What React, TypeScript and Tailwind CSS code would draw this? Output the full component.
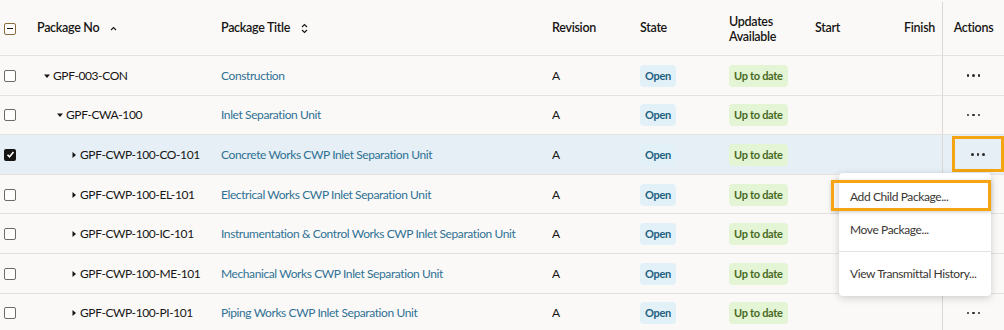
import React from 'react';

type Row = {
  no: string;
  title: string;
  level: number;
  expanded: boolean;
  selected?: boolean;
};

const rows: Row[] = [
  { no: 'GPF-003-CON', title: 'Construction', level: 0, expanded: true },
  { no: 'GPF-CWA-100', title: 'Inlet Separation Unit', level: 1, expanded: true },
  { no: 'GPF-CWP-100-CO-101', title: 'Concrete Works CWP Inlet Separation Unit', level: 2, expanded: false, selected: true },
  { no: 'GPF-CWP-100-EL-101', title: 'Electrical Works CWP Inlet Separation Unit', level: 2, expanded: false },
  { no: 'GPF-CWP-100-IC-101', title: 'Instrumentation & Control Works CWP Inlet Separation Unit', level: 2, expanded: false },
  { no: 'GPF-CWP-100-ME-101', title: 'Mechanical Works CWP Inlet Separation Unit', level: 2, expanded: false },
  { no: 'GPF-CWP-100-PI-101', title: 'Piping Works CWP Inlet Separation Unit', level: 2, expanded: false },
];

const cols = 'grid grid-cols-[37px_184px_331px_88px_89px_86px_65px_62px_62px]';
const indent = ['pl-[6px]', 'pl-[19px]', 'pl-[33px]'];

const Caret = ({ down }: { down: boolean }) =>
  down ? (
    <svg width="8" height="8" viewBox="0 0 8 8" className="mr-[2px] shrink-0">
      <path d="M1 2.5h6L4 6z" fill="#161513" />
    </svg>
  ) : (
    <svg width="8" height="8" viewBox="0 0 8 8" className="mr-[2px] shrink-0">
      <path d="M2.5 1v6L6 4z" fill="#161513" />
    </svg>
  );

const Checkbox = ({ checked }: { checked?: boolean }) =>
  checked ? (
    <span className="flex h-[12px] w-[12px] items-center justify-center rounded-[2px] bg-[#161513]">
      <svg width="9" height="9" viewBox="0 0 9 9">
        <path d="M1.5 4.8l2 2L7.5 2" stroke="#fff" strokeWidth="1.6" fill="none" />
      </svg>
    </span>
  ) : (
    <span className="block h-[12px] w-[12px] rounded-[2px] border border-[#6f6a64] bg-white" />
  );

const Dots = () => (
  <span className="flex items-center gap-[3px]">
    <span className="h-[2.5px] w-[2.5px] rounded-full bg-[#2b2825]" />
    <span className="h-[2.5px] w-[2.5px] rounded-full bg-[#2b2825]" />
    <span className="h-[2.5px] w-[2.5px] rounded-full bg-[#2b2825]" />
  </span>
);

const badge = 'rounded-[4px] px-[5px] py-[4px] text-[11px] font-bold leading-[14px] tracking-[-0.3px]';

export default function App() {
  return (
    <div className="relative h-[330px] w-[1004px] overflow-hidden bg-[#fbf9f8] text-[12px] tracking-[-0.4px] text-[#161513] [font-family:'Lato','Noto_Sans',sans-serif]">
      {/* header */}
      <div className={`${cols} h-[56px] border-b border-[#e5e2de] pt-[2px] text-[12.5px] font-semibold tracking-[-0.3px]`}>
        <div className="flex items-center pl-[4px]">
          <span className="flex h-[12px] w-[12px] items-center justify-center rounded-[2px] border border-[#8a6b3e] bg-white">
            <span className="h-[1.5px] w-[6px] bg-[#161513]" />
          </span>
        </div>
        <div className="flex items-center gap-[10px]">
          Package No
          <svg width="9" height="9" viewBox="0 0 9 9">
            <path d="M2 6l2.5-2.5L7 6" stroke="#161513" strokeWidth="1.1" fill="none" />
          </svg>
        </div>
        <div className="flex items-center gap-[10px]">
          Package Title
          <svg width="9" height="11" viewBox="0 0 9 11">
            <path d="M2 4l2.5-2.5L7 4M2 7l2.5 2.5L7 7" stroke="#161513" strokeWidth="1.1" fill="none" />
          </svg>
        </div>
        <div className="flex items-center">Revision</div>
        <div className="flex items-center">State</div>
        <div className="flex items-center leading-[15px]">
          Updates
          <br />
          Available
        </div>
        <div className="flex items-center">Start</div>
        <div className="flex items-center justify-end pr-[7px]">Finish</div>
        <div className="flex items-center justify-center border-l border-[#dcd8d3]">Actions</div>
      </div>

      {rows.map((r) => (
        <div
          key={r.no}
          className={`${cols} h-[39.6px] border-b border-[#e5e2de] pt-[1px] ${r.selected ? 'bg-[#e5eff5]' : ''}`}
        >
          <div className="flex items-center pl-[4px]">
            <Checkbox checked={r.selected} />
          </div>
          <div className={`flex items-center whitespace-nowrap ${indent[r.level]}`}>
            <Caret down={r.expanded} />
            {r.no}
          </div>
          <div className="flex items-center whitespace-nowrap text-[#2f7194]">{r.title}</div>
          <div className="flex items-center">A</div>
          <div className="flex items-center">
            <span className={`${badge} bg-[#e2f0f8] text-[#22607f]`}>Open</span>
          </div>
          <div className="flex items-center">
            <span className={`${badge} bg-[#e3f5d5] text-[#4a6a24]`}>Up to date</span>
          </div>
          <div />
          <div />
          <div className="-mt-[1px] flex items-center justify-center border-l border-[#dcd8d3]">
            {r.selected ? (
              <span className="ml-[9px] flex h-[36px] w-[52px] items-center justify-center border-[3px] border-[#f5a511] bg-[#e5eff5]">
                <Dots />
              </span>
            ) : (
              <Dots />
            )}
          </div>
        </div>
      ))}

      {/* actions menu */}
      <div className="absolute left-[839px] top-[173px] w-[152px] rounded-[4px] bg-white text-[#3a3632] shadow-[0_2px_8px_rgba(0,0,0,0.18)]">
        <div className="relative flex h-[46px] items-center whitespace-nowrap pl-[11px] pt-[2px]">
          <span className="absolute -left-[8px] right-0 top-[7px] bottom-[8px] border-[3px] border-[#f5a511] shadow-[0_1px_4px_rgba(0,0,0,0.2)]" />
          Add Child Package...
        </div>
        <div className="flex h-[32px] items-center whitespace-nowrap pb-[10px] pl-[11px]">Move Package...</div>
        <div className="h-px bg-[#e5e2de]" />
        <div className="flex h-[44px] items-center whitespace-nowrap pl-[11px]">View Transmittal History...</div>
      </div>
    </div>
  );
}
